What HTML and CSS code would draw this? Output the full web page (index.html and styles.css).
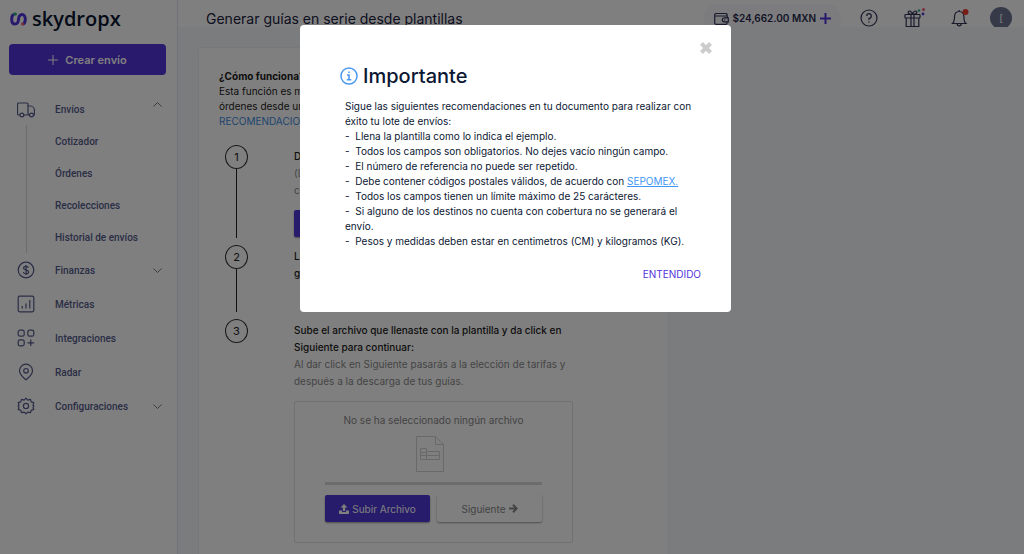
FILE: index.html
```
<!DOCTYPE html>
<html lang="es">
<head>
    <meta charset="UTF-8">
    <meta name="viewport" content="width=device-width, initial-scale=1.0">
    <title>Skydropx - Generar guías en serie</title>

    <link rel="stylesheet" href="styles.css">
</head>
<body>
    <div class="app">
        <!-- Sidebar -->
        <aside class="sidebar">
            <a class="logo" href="#">
                <svg width="17" height="14" viewBox="0 0 17 14" fill="none" stroke-width="3" stroke-linecap="round">
                    <path d="M3.500 2.500C2 3.300 1.700 4.500 1.700 7.500c0 6 6.300 6.200 6.800 0 .5-6.500 6.800-6.500 6.800-.5 0 3-.6 4.200-1.800 4.800" stroke="#5234dc"/>
                    <path d="M4.500 2h1" stroke="#2fa98c"/>
                    <path d="M12.500 12h.2" stroke="#ef5b78"/>
                </svg>
                <span>skydropx</span>
            </a>

            <button class="create-btn" type="button">
                <svg width="10" height="10" viewBox="0 0 10 10" stroke="currentColor"><path d="M5 0v10M0 5h10"/></svg>
                Crear envío
            </button>

            <nav>
                <ul class="menu">
                    <li class="open">
                        <a href="#">
                            <svg class="icon" viewBox="0 0 18 18"><path d="M3 15H1.700a1.200 1.200 0 0 1-1.200-1.200V4.200A1.200 1.200 0 0 1 1.700 3h8.100A1.200 1.200 0 0 1 11 4.200V15H6.800M11 6h2.500c2.500 0 4 2.500 4 5v4h-1.200M11 15h1.800"/><circle cx="4.900" cy="15" r="1.900"/><circle cx="14.500" cy="15" r="1.900"/></svg>
                            <span>Envíos</span>
                            <svg class="chevron up" viewBox="0 0 9 5"><path d="M.5 4.500l4-4 4 4"/></svg>
                        </a>
                        <ul class="submenu">
                            <li><a href="#">Cotizador</a></li>
                            <li><a href="#">Órdenes</a></li>
                            <li><a href="#">Recolecciones</a></li>
                            <li><a href="#">Historial de envíos</a></li>
                        </ul>
                    </li>
                    <li>
                        <a href="#">
                            <svg class="icon" viewBox="0 0 18 18"><circle cx="9" cy="9" r="7.800"/><path d="M11.500 6.700C11.200 5.700 10.200 5.300 9 5.300c-1.500 0-2.500.7-2.500 1.800C6.500 9.500 11.600 8.300 11.600 10.900c0 1.100-1.100 1.900-2.600 1.900-1.300 0-2.400-.6-2.700-1.700M9 4v10"/></svg>
                            <span>Finanzas</span>
                            <svg class="chevron" viewBox="0 0 9 5"><path d="M.5.5l4 4 4-4"/></svg>
                        </a>
                    </li>
                    <li>
                        <a href="#">
                            <svg class="icon" viewBox="0 0 18 18"><rect x="1.200" y="1.200" width="15.600" height="15.600" rx="1.500"/><path d="M5.200 11v2.500M9 8.500v5M12.800 5v8.500"/></svg>
                            <span>Métricas</span>
                        </a>
                    </li>
                    <li>
                        <a href="#">
                            <svg class="icon" viewBox="0 0 18 18"><rect x="1.200" y="1.200" width="6" height="6" rx="1.800"/><rect x="10.800" y="1.200" width="6" height="6" rx="1.800"/><rect x="1.200" y="10.800" width="6" height="6" rx="1.800"/><path d="M13.800 10.500v6.600M10.500 13.800h6.600"/></svg>
                            <span>Integraciones</span>
                        </a>
                    </li>
                    <li>
                        <a href="#">
                            <svg class="icon" viewBox="0 0 18 18"><path d="M9 16.800C6.500 14.600 2.500 11.800 2.500 7.700a6.500 6.500 0 0 1 13 0C15.500 11.800 11.500 14.600 9 16.800z"/><circle cx="9" cy="7.800" r="2.300"/></svg>
                            <span>Radar</span>
                        </a>
                    </li>
                    <li>
                        <a href="#">
                            <svg class="icon" viewBox="0 0 18 18" stroke-linejoin="round"><path d="M9 1.200l1.800 1.900 2.700-.8.700 2.600 2.600.7-.8 2.600L16.900 9l-.9 1.800.8 1.600-2.600 1-.7 2.300-2.700-.6L9 16.800l-1.800-1.700-2.700.6-.7-2.300-2.600-1 .8-1.600L1.100 9 2 8.200l-.8-2.600 2.600-.7.700-2.600 2.700.8z"/><circle cx="9" cy="9" r="2.600"/></svg>
                            <span>Configuraciones</span>
                            <svg class="chevron" viewBox="0 0 9 5"><path d="M.5.5l4 4 4-4"/></svg>
                        </a>
                    </li>
                </ul>
            </nav>
        </aside>

        <!-- Main Content -->
        <div class="content">
            <header class="topbar">
                <div class="topbar-row">
                    <h1>Generar guías en serie desde plantillas</h1>
                    <div class="topbar-actions">
                        <button class="balance" type="button">
                            <svg width="15" height="13" viewBox="0 0 15 13" fill="none" stroke="#33365a" stroke-width="1.200"><path d="M13 4V2.500a1 1 0 0 0-1-1H2A1.300 1.300 0 0 0 .7 2.700v8A1.500 1.500 0 0 0 2.200 12.300H12a1 1 0 0 0 1-1V10M1 4h12.300v1.500M14.300 5.800h-4a2 2 0 0 0 0 4h4z"/><path d="M10.300 7.800h1"/></svg>
                            $24,662.00 MXN
                            <svg width="11" height="11" viewBox="0 0 11 11" stroke="#5234dc" stroke-width="2"><path d="M5.500 0v11M0 5.500h11"/></svg>
                        </button>
                        <button class="icon-btn" type="button" aria-label="Ayuda">
                            <svg width="18" height="18" viewBox="0 0 18 18"><circle cx="9" cy="9" r="8"/><path d="M6.700 7A2.300 2.300 0 1 1 9 9.300v1.600M9 12.200v1.300"/></svg>
                        </button>
                        <button class="icon-btn gift" type="button" aria-label="Regalos">
                            <svg width="22" height="20" viewBox="0 0 22 20"><rect x="1" y="6.500" width="15" height="3.500" rx=".5"/><path d="M2.200 10v8.500h12.600V10M7 6.500v12M10 6.500v12M8.500 6.300C5 6.500 3.800 5 4.300 3.800c.7-1.600 3.500-.8 4.200 2.500.7-3.300 3.500-4.100 4.200-2.500.5 1.200-.7 2.700-4.200 2.500z"/><g stroke="none"><circle cx="15" cy="2.500" r="1.300" fill="#2fa98c"/><circle cx="19.500" cy="1.500" r="1.500" fill="#ef5b78"/><circle cx="19" cy="6" r="1.400" fill="#5234dc"/></g></svg>
                        </button>
                        <button class="icon-btn bell" type="button" aria-label="Notificaciones">
                            <svg width="18" height="20" viewBox="0 0 18 20"><path d="M1.500 15.500c1.800-1.500 2-3 2-6.500 0-3.300 1.900-5.500 4.700-5.500s4.700 2.200 4.700 5.500c0 3.500.2 5 2 6.500zM6.200 15.800a2 2 0 0 0 4 0M8.200 3.500V2"/><circle cx="14.500" cy="4" r="3" fill="#f03a2e" stroke="none"/></svg>
                        </button>
                        <button class="avatar" type="button">[</button>
                    </div>
                </div>
            </header>

            <main class="card">
                <div class="intro">
                    <h2>¿Cómo funciona?</h2>
                    <p>Esta función es más<br>órdenes desde un<br><a href="#">RECOMENDACIONES</a></p>
                </div>

                <ol class="steps">
                    <li class="step">
                        <div class="marker"><span>1</span></div>
                        <div class="step-body">
                            <p>Descarga</p>
                            <p class="hint">(La<br>con</p>
                            <button class="btn primary" type="button" aria-label="Descargar plantilla"></button>
                        </div>
                    </li>
                    <li class="step">
                        <div class="marker"><span>2</span></div>
                        <div class="step-body">
                            <p>Llena<br>guía</p>
                        </div>
                    </li>
                    <li class="step">
                        <div class="marker"><span>3</span></div>
                        <div class="step-body">
                            <p>Sube el archivo que llenaste con la plantilla y da click en Siguiente para continuar:</p>
                            <p class="hint">Al dar click en Siguiente pasarás a la elección de tarifas y después a la descarga de tus guías.</p>
                            <div class="upload-box">
                                <p>No se ha seleccionado ningún archivo</p>
                                <svg class="file-icon" width="36" height="36" viewBox="0 0 36 36" fill="none" stroke="#d2d2d2"><path d="M.5.500h19l8 8v27H.5zM19.500.500v8h8M4.500 12.500h6v11h-6zM10.500 15.500h13v8h-13M4.500 16.500h6M4.500 19.500h19"/></svg>
                                <div class="progress"></div>
                                <div class="upload-actions">
                                    <button class="btn primary" type="button">
                                        <svg width="10" height="10" viewBox="0 0 10 10" fill="currentColor"><path d="M5 0l3.500 3.500H6.200V7H3.800V3.500H1.500zM0 6.500h3V8h4V6.500h3V10H0z"/></svg>
                                        Subir Archivo
                                    </button>
                                    <button class="btn next" type="button">
                                        Siguiente
                                        <svg width="9" height="9" viewBox="0 0 9 9" fill="none" stroke="currentColor" stroke-width="2"><path d="M0 4.500h7.500M4 .8l3.700 3.700L4 8.200"/></svg>
                                    </button>
                                </div>
                            </div>
                        </div>
                    </li>
                </ol>
            </main>
        </div>
    </div>

    <!-- Modal -->
    <div class="overlay">
        <div class="modal" role="dialog" aria-labelledby="modal-title">
            <button class="close" type="button" aria-label="Cerrar">
                <svg width="12" height="12" viewBox="0 0 12 12" stroke="#cccccc" stroke-width="4"><path d="M1.500 1.500l9 9M10.500 1.500l-9 9"/></svg>
            </button>
            <div class="modal-title">
                <svg width="18" height="18" viewBox="0 0 18 18" fill="none" stroke="#4a98f0" stroke-width="1.500"><circle cx="9" cy="9" r="8"/><path d="M7 8h2v4.500M6.800 12.700h4.500M8.200 5.300h1.600" stroke-width="1.600"/></svg>
                <h2 id="modal-title">Importante</h2>
            </div>
            <div class="modal-text">
                <p>Sigue las siguientes recomendaciones en tu documento para realizar con éxito tu lote de envíos:</p>
                <p>-&nbsp; Llena la plantilla como lo indica el ejemplo.</p>
                <p>-&nbsp; Todos los campos son obligatorios. No dejes vacío ningún campo.</p>
                <p>-&nbsp; El número de referencia no puede ser repetido.</p>
                <p>-&nbsp; Debe contener códigos postales válidos, de acuerdo con <a href="#">SEPOMEX.</a></p>
                <p>-&nbsp; Todos los campos tienen un límite máximo de 25 carácteres.</p>
                <p>-&nbsp; Si alguno de los destinos no cuenta con cobertura no se generará el envío.</p>
                <p>-&nbsp; Pesos y medidas deben estar en centimetros (CM) y kilogramos (KG).</p>
            </div>
            <button class="accept" type="button">ENTENDIDO</button>
        </div>
    </div>
</body>
</html>
```
FILE: styles.css
```
/* Basic reset */
* {
    margin: 0;
    padding: 0;
    box-sizing: border-box;
}

body {
    font-family: Inter, "Liberation Sans", sans-serif;
    font-size: 10px;
    color: #1a1a1a;
    background-color: #f6f9fd;
    overflow: hidden;
}

button {
    font-family: inherit;
    border: none;
    background: none;
    cursor: pointer;
}

a {
    color: inherit;
    text-decoration: none;
}

ul,
ol {
    list-style: none;
}

.app {
    display: flex;
    height: 100vh;
    overflow: hidden;
}

/* Sidebar */
.sidebar {
    flex: 0 0 178px;
    background-color: #fff;
    border-right: 1px solid #dfe5f0;
}

.logo {
    display: flex;
    align-items: center;
    gap: 5px;
    height: 36px;
    padding-left: 10px;
}

.logo svg {
    margin-top: 2px;
}

.logo span {
    font-family: "Open Sans", sans-serif;
    font-size: 20px;
    font-weight: 600;
    color: #0a1630;
}

.create-btn {
    display: flex;
    align-items: center;
    justify-content: center;
    gap: 7px;
    width: 157px;
    height: 31px;
    margin: 8px 0 18px 9px;
    border-radius: 4px;
    background-color: #5234dc;
    color: #fff;
    font-size: 11px;
    font-weight: 600;
}

.menu a {
    display: flex;
    align-items: center;
    height: 34px;
    padding: 0 15px 0 17px;
    color: #555b8c;
    font-family: Roboto, sans-serif;
    font-weight: 500;
}

.menu .open > a {
    height: 32px;
}

.menu span {
    flex: 1;
}

.icon {
    width: 18px;
    height: 18px;
    margin-right: 20px;
    fill: none;
    stroke: #555b8c;
    stroke-width: 1.2;
}

.chevron {
    width: 9px;
    height: 5px;
    fill: none;
    stroke: #777;
}

.chevron.up {
    margin-bottom: 9px;
}

.menu .submenu {
    margin-left: 26px;
    border-left: 1px solid #d8d8d8;
}

.menu .submenu a {
    height: 32px;
    padding-left: 28px;
}

/* Top bar */
.content {
    flex: 1;
    display: flex;
    flex-direction: column;
}

.topbar {
    flex: 0 0 27px;
    overflow: hidden;
    background-color: #fff;
}

.topbar-row {
    display: flex;
    align-items: center;
    justify-content: space-between;
    height: 36px;
    padding: 0 12px 0 28px;
}

.topbar h1 {
    font-size: 14px;
    font-weight: 400;
    color: #1a2140;
}

.topbar-actions {
    display: flex;
    align-items: center;
}

.balance {
    display: flex;
    align-items: center;
    gap: 4px;
    height: 28px;
    padding: 0 10px;
    margin-right: 19px;
    border-radius: 14px;
    background-color: #f8f8fc;
    color: #272b4d;
    font-size: 10px;
    font-weight: 600;
}

.icon-btn {
    display: flex;
    margin-right: 26px;
    fill: none;
}

.icon-btn svg {
    stroke: #33365a;
    stroke-width: 1.2;
}

.icon-btn.gift {
    margin-right: 25px;
}

.icon-btn.bell {
    margin-right: 21px;
}

.avatar {
    width: 22px;
    height: 22px;
    border-radius: 50%;
    background-color: #6c7391;
    color: #fff;
    font-size: 10px;
}

/* Card */
.card {
    flex: 1;
    max-width: 471px;
    margin: 20px 20px 0;
    padding: 21px 20px;
    background-color: #fff;
    border: 1px solid #f0f0f0;
    border-radius: 3px;
}

.intro {
    margin-bottom: 16px;
    line-height: 15px;
}

.intro h2 {
    font-size: 10px;
    font-weight: 700;
}

.intro a {
    color: #3c8ae0;
}

.step {
    display: flex;
    min-height: 74px;
}

.marker {
    display: flex;
    flex-direction: column;
    align-items: center;
    flex: 0 0 35px;
    margin-right: 40px;
}

.marker span {
    width: 23px;
    height: 24px;
    border: 1px solid #333;
    border-radius: 50%;
    font-size: 11px;
    line-height: 22px;
    text-align: center;
}

.step:not(:last-child) .marker::after {
    content: "";
    flex: 1;
    width: 1px;
    margin-bottom: 7px;
    background-color: #222;
}

.step-body {
    padding: 3px 0 8px;
    flex: 0 1 279px;
    font-size: 10px;
    font-weight: 500;
    line-height: 17px;
}

.hint {
    color: #8a8a8a;
    font-weight: 400;
}

.btn {
    display: flex;
    align-items: center;
    justify-content: center;
    gap: 3px;
    width: 105px;
    height: 27px;
    border-radius: 2px;
    font-size: 10px;
    box-shadow: 0 1px 2px rgba(0, 0, 0, 0.4);
}

.btn.primary {
    background-color: #4f38d6;
    color: #fff;
}

.btn.next {
    color: #888;
}

.hint + .btn {
    margin-top: 11px;
}

/* Upload box */
.upload-box {
    margin-top: 11px;
    padding: 10px 30px 20px;
    border: 1px solid #e2e2e2;
    border-radius: 2px;
    color: #888;
    font-weight: 400;
    text-align: center;
}

.file-icon {
    display: block;
    margin: 7px auto 10px;
}

.progress {
    height: 3px;
    margin-bottom: 10px;
    background-color: #d8d8d8;
}

.upload-actions {
    display: flex;
    justify-content: space-between;
}

/* Modal */
.overlay {
    position: fixed;
    inset: 0;
    display: flex;
    justify-content: center;
    align-items: flex-start;
    padding: 25px 0 0 7px;
    background-color: rgba(0, 0, 0, 0.5);
}

.modal {
    display: flex;
    flex-direction: column;
    width: 431px;
    padding: 17px 30px 30px 40px;
    border-radius: 4px;
    background-color: #fff;
    color: #0c1733;
}

.close {
    align-self: flex-end;
    display: flex;
    margin-right: -11px;
}

.modal-title {
    display: flex;
    align-items: center;
    gap: 5px;
    margin-top: 8px;
}

.modal-title h2 {
    font-size: 20px;
    font-weight: 500;
    line-height: 28px;
}

.modal-text {
    margin-top: 9px;
    padding-left: 5px;
    font-size: 10px;
    line-height: 15px;
}

.modal-text a {
    color: #3f97f5;
    text-decoration: underline;
}

.accept {
    align-self: flex-end;
    margin-top: 17px;
    color: #5234dc;
    font-size: 10px;
    line-height: 16px;
}
```
